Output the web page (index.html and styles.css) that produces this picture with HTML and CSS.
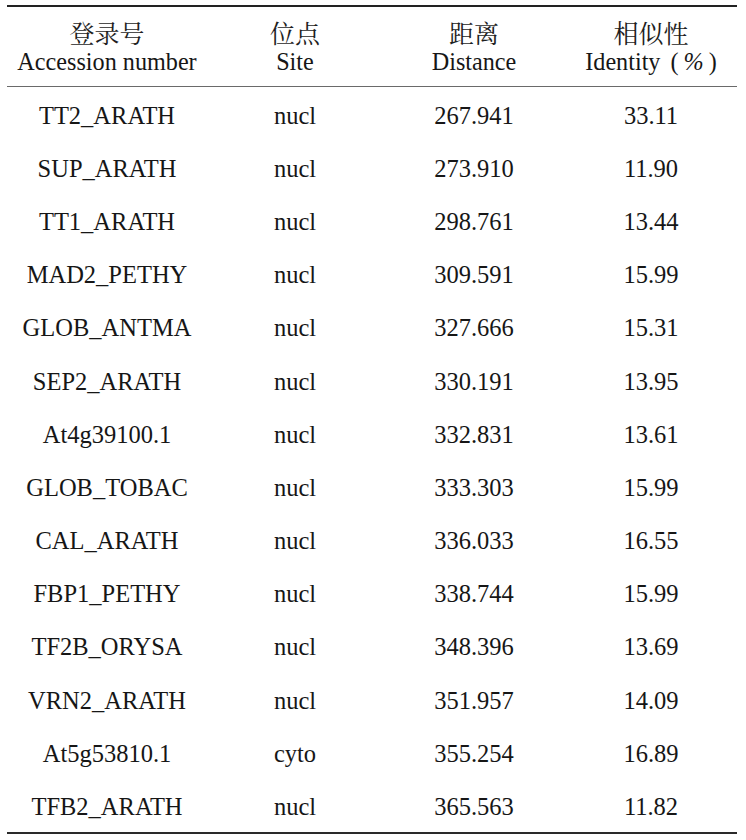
FILE: index.html
```html
<!DOCTYPE html>
<html lang="en">
<head>
<meta charset="utf-8">
<title>Table</title>
<link rel="stylesheet" href="styles.css">
</head>
<body>
<div class="table">
  <div class="row head">
    <div class="cell"><span class="zh">登录号</span><span class="en">Accession number</span></div>
    <div class="cell"><span class="zh">位点</span><span class="en">Site</span></div>
    <div class="cell"><span class="zh">距离</span><span class="en">Distance</span></div>
    <div class="cell"><span class="zh">相似性</span><span class="en">Identity<span class="paren">(<span class="pct">%</span>)</span></span></div>
  </div>
  <div class="body">
    <div class="row"><div class="cell">TT2_ARATH</div><div class="cell">nucl</div><div class="cell">267.941</div><div class="cell">33.11</div></div>
    <div class="row"><div class="cell">SUP_ARATH</div><div class="cell">nucl</div><div class="cell">273.910</div><div class="cell">11.90</div></div>
    <div class="row"><div class="cell">TT1_ARATH</div><div class="cell">nucl</div><div class="cell">298.761</div><div class="cell">13.44</div></div>
    <div class="row"><div class="cell">MAD2_PETHY</div><div class="cell">nucl</div><div class="cell">309.591</div><div class="cell">15.99</div></div>
    <div class="row"><div class="cell">GLOB_ANTMA</div><div class="cell">nucl</div><div class="cell">327.666</div><div class="cell">15.31</div></div>
    <div class="row"><div class="cell">SEP2_ARATH</div><div class="cell">nucl</div><div class="cell">330.191</div><div class="cell">13.95</div></div>
    <div class="row"><div class="cell">At4g39100.1</div><div class="cell">nucl</div><div class="cell">332.831</div><div class="cell">13.61</div></div>
    <div class="row"><div class="cell">GLOB_TOBAC</div><div class="cell">nucl</div><div class="cell">333.303</div><div class="cell">15.99</div></div>
    <div class="row"><div class="cell">CAL_ARATH</div><div class="cell">nucl</div><div class="cell">336.033</div><div class="cell">16.55</div></div>
    <div class="row"><div class="cell">FBP1_PETHY</div><div class="cell">nucl</div><div class="cell">338.744</div><div class="cell">15.99</div></div>
    <div class="row"><div class="cell">TF2B_ORYSA</div><div class="cell">nucl</div><div class="cell">348.396</div><div class="cell">13.69</div></div>
    <div class="row"><div class="cell">VRN2_ARATH</div><div class="cell">nucl</div><div class="cell">351.957</div><div class="cell">14.09</div></div>
    <div class="row"><div class="cell">At5g53810.1</div><div class="cell">cyto</div><div class="cell">355.254</div><div class="cell">16.89</div></div>
    <div class="row"><div class="cell">TFB2_ARATH</div><div class="cell">nucl</div><div class="cell">365.563</div><div class="cell">11.82</div></div>
  </div>
</div>
</body>
</html>
```

FILE: styles.css
```css
html, body {
  background: #ffffff;
}
body {
  margin: 5px 9px 0 7px;
  font-family: "Liberation Serif", "Times New Roman", serif;
  color: #161616;
  font-size: 24px;
}
.table {
  width: 730px;
  border-top: 2.5px solid #222;
  border-bottom: 2.5px solid #2a2a2a;
}
.row {
  display: grid;
  grid-template-columns: 200px 176px 182px 172px;
  align-items: center;
}
.head {
  height: 79px;
  border-bottom: 1.5px solid #6a6a6a;
}
.head .cell {
  display: flex;
  flex-direction: column;
  align-items: center;
  padding-top: 1px;
}
.zh {
  font-family: "Noto Serif CJK SC", "Noto Sans CJK SC", serif;
  font-weight: 400;
  font-size: 25px;
  line-height: 29px;
  color: #1e1e1e;
}
.en {
  font-family: "Liberation Serif", "Times New Roman", serif;
  font-size: 24.2px;
  line-height: 29px;
  height: 29px;
  white-space: nowrap;
}
.paren {
  margin-left: 10px;
}
.pct {
  font-style: italic;
  margin: 0 5px;
}
.body .row {
  height: 53.2px;
}
.cell {
  text-align: center;
}
.body .cell {
  font-family: "Liberation Serif", "Times New Roman", serif;
  font-size: 24.5px;
  line-height: 28px;
  padding-top: 4px;
}
```
